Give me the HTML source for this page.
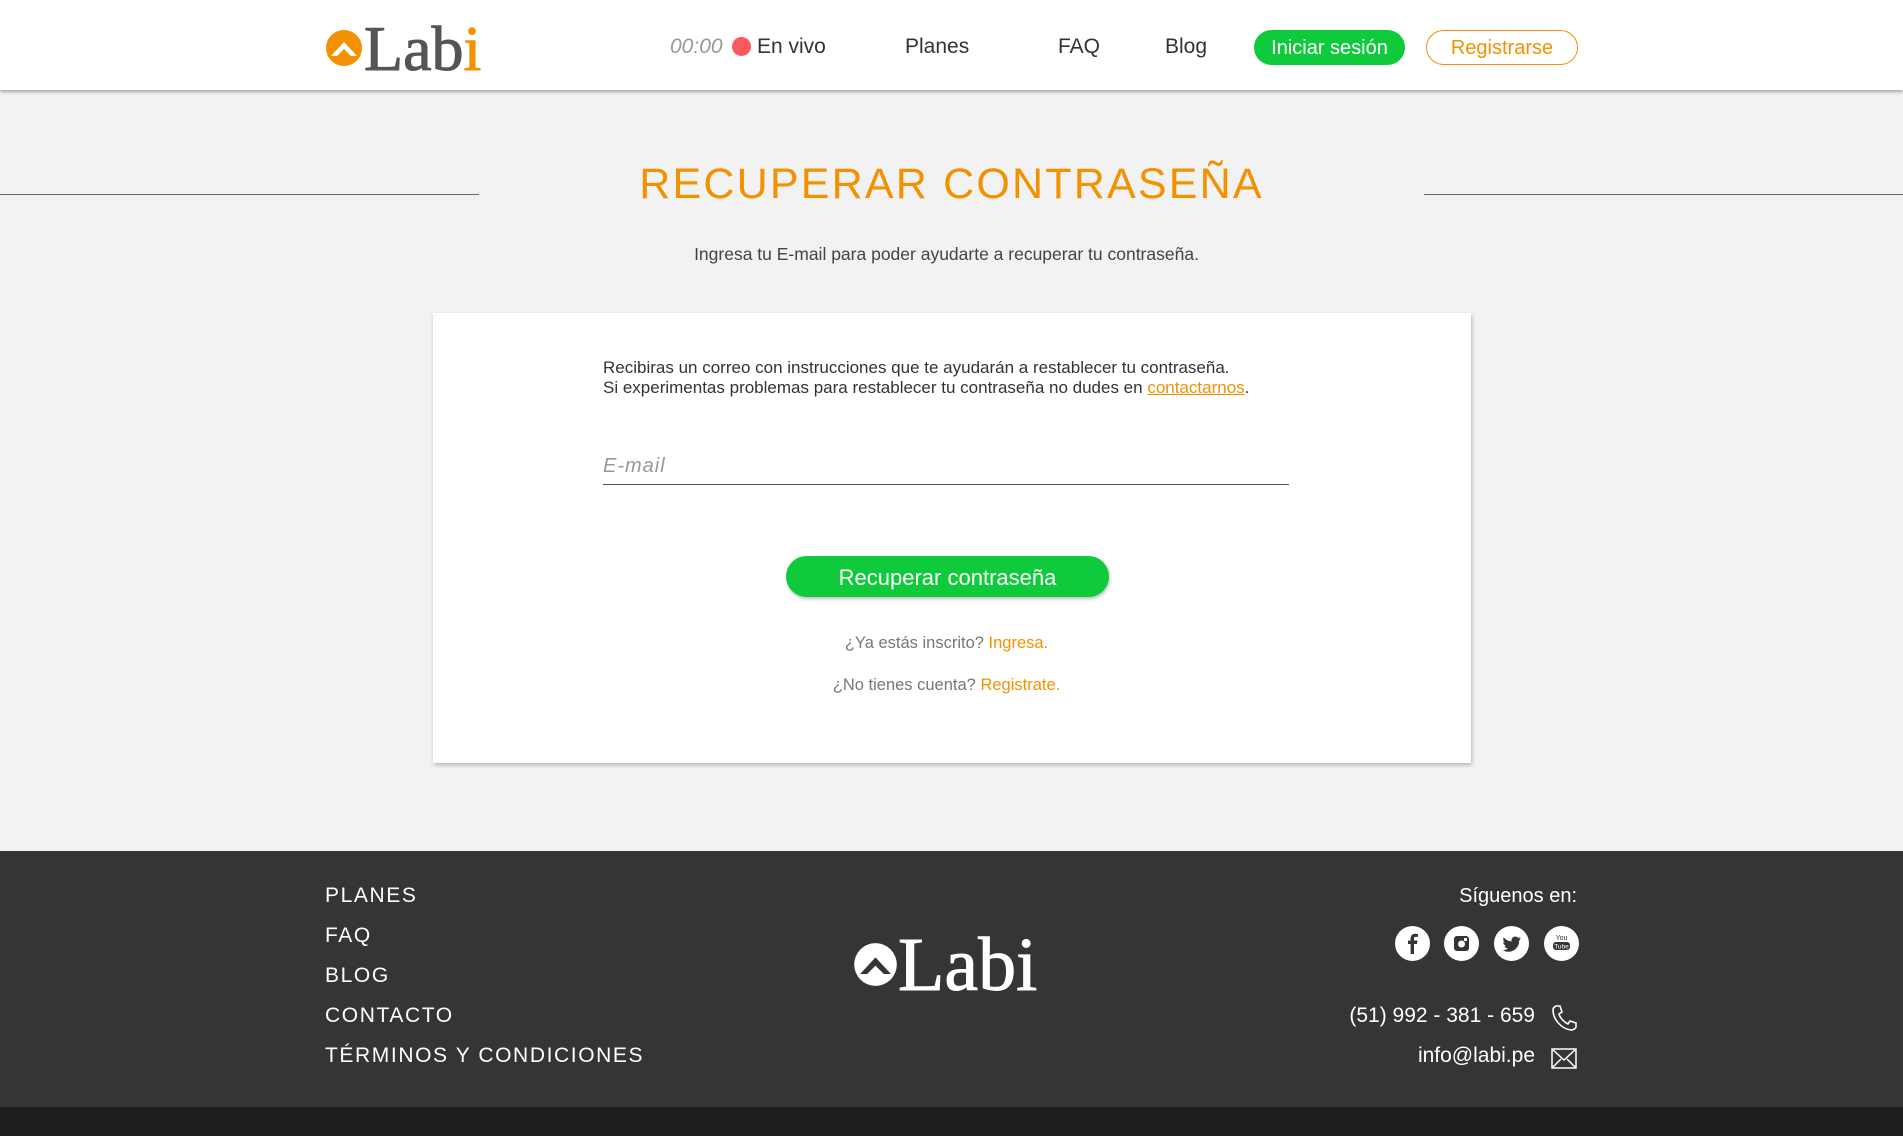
<!DOCTYPE html>
<html><head><meta charset="utf-8"><style>
*{margin:0;padding:0;box-sizing:border-box}
body{width:1903px;height:1136px;background:#f2f2f2;font-family:"Liberation Sans",sans-serif;position:relative;overflow:hidden;color:#333}
.a{position:absolute;white-space:nowrap}
header{position:absolute;left:0;top:0;width:1903px;height:90px;background:#fff;box-shadow:0 2px 3px rgba(0,0,0,.3)}
.nav{font-size:21px;color:#333}
.btn1{left:1254px;top:30px;width:151px;height:35px;border-radius:18px;background:#0fcb3c;color:#fff;font-size:20px;text-align:center;line-height:35px}
.btn2{left:1426px;top:30px;width:152px;height:35px;border-radius:18px;border:1px solid #f39200;color:#f39200;font-size:20px;text-align:center;line-height:33px;background:#fff}
.card{left:433px;top:313px;width:1038px;height:450px;background:#fff;box-shadow:1px 2px 4px rgba(0,0,0,.25)}
footer{position:absolute;left:0;top:851px;width:1903px;height:256px;background:#353535}
.fl{left:325px;color:#fff;font-size:21px;letter-spacing:1.6px}
.ic{width:35px;height:35px;border-radius:50%;background:#fff;top:926px}
</style></head><body>
<header>
<svg class="a" style="left:325px;top:29px" width="38" height="38" viewBox="0 0 38 38"><circle cx="19" cy="19" r="18" fill="#f39200"/><path d="M6 27 L19 13 L32 27 L26 27 L19 20 L12 27Z" fill="#fff"/></svg>
<div class="a" style="left:364px;top:13px;font-family:'Liberation Serif',serif;font-size:64px;color:#555;line-height:72px;-webkit-text-stroke:1px #555">Lab<span style="color:#f39200;-webkit-text-stroke:1px #f39200">i</span></div>
<div class="a nav" style="left:670px;top:35px;color:#999;font-style:italic">00:00</div>
<div class="a" style="left:732px;top:37px;width:19px;height:19px;border-radius:50%;background:#f95a5e"></div>
<div class="a nav" style="left:757px;top:35px">En vivo</div>
<div class="a nav" style="left:905px;top:35px">Planes</div>
<div class="a nav" style="left:1058px;top:35px">FAQ</div>
<div class="a nav" style="left:1165px;top:35px">Blog</div>
<div class="a btn1" style="top:30px;line-height:37px">Iniciar sesión</div>
<div class="a btn2" style="line-height:35px">Registrarse</div>
</header>
<div class="a" style="left:0;top:194px;width:479px;height:1px;background:#666"></div>
<div class="a" style="left:1424px;top:194px;width:479px;height:1px;background:#666"></div>
<div class="a" style="left:0;width:1903px;top:160px;text-align:center;font-size:43px;letter-spacing:2.2px;color:#f39200">RECUPERAR CONTRASEÑA</div>
<div class="a" style="left:0;width:1893px;top:244px;text-align:center;font-size:17.5px;color:#444">Ingresa tu E-mail para poder ayudarte a recuperar tu contraseña.</div>
<div class="a card"></div>
<div class="a" style="left:603px;top:358px;font-size:17px;line-height:20px;color:#333">Recibiras un correo con instrucciones que te ayudarán a restablecer tu contraseña.<br>Si experimentas problemas para restablecer tu contraseña no dudes en <span style="color:#f39200;text-decoration:underline">contactarnos</span>.</div>
<div class="a" style="left:603px;top:455px;font-size:20px;font-style:italic;color:#999;letter-spacing:1px">E-mail</div>
<div class="a" style="left:603px;top:484px;width:686px;height:1px;background:#555"></div>
<div class="a" style="left:786px;top:556px;width:323px;height:41px;border-radius:21px;background:#0fcb3c;color:#fff;font-size:22px;text-align:center;line-height:43px;box-shadow:1px 2px 3px rgba(0,0,0,.25)">Recuperar contraseña</div>
<div class="a" style="left:0;width:1893px;top:634px;text-align:center;font-size:16.5px;color:#777">¿Ya estás inscrito? <span style="color:#f39200">Ingresa.</span></div>
<div class="a" style="left:0;width:1893px;top:676px;text-align:center;font-size:16.5px;color:#777">¿No tienes cuenta? <span style="color:#f39200">Registrate.</span></div>
<footer></footer>
<div class="a" style="left:0;top:1107px;width:1903px;height:29px;background:#1e1e1e"></div>
<div class="a fl" style="top:884px">PLANES</div>
<div class="a fl" style="top:924px">FAQ</div>
<div class="a fl" style="top:964px">BLOG</div>
<div class="a fl" style="top:1004px">CONTACTO</div>
<div class="a fl" style="top:1044px">TÉRMINOS Y CONDICIONES</div>
<svg class="a" style="left:853px;top:942px" width="45" height="45" viewBox="0 0 38 38"><circle cx="19" cy="19" r="18" fill="#fff"/><path d="M6 27 L19 13 L32 27 L26 27 L19 20 L12 27Z" fill="#353535"/></svg>
<div class="a" style="left:898px;top:925px;font-family:'Liberation Serif',serif;font-size:76px;color:#fff;line-height:80px;-webkit-text-stroke:1px #fff">Labi</div>
<div class="a" style="right:326px;top:885px;font-size:20px;color:#fff">Síguenos en:</div>
<div class="a ic" style="left:1395px"><svg width="35" height="35" viewBox="0 0 35 35"><path d="M19 28V18h3l.5-3.5H19v-2c0-1 .4-1.6 1.7-1.6H23V8a20 20 0 0 0-2.8-.2c-2.8 0-4.6 1.7-4.6 4.8v2H13V18h2.6v10z" fill="#353535"/></svg></div>
<div class="a ic" style="left:1444px"><svg width="35" height="35" viewBox="0 0 35 35"><rect x="10" y="10" width="15" height="15" rx="3" fill="#353535"/><circle cx="17.5" cy="18" r="3.5" fill="#fff"/><rect x="20" y="12" width="3" height="3" fill="#fff"/></svg></div>
<div class="a ic" style="left:1494px"><svg width="35" height="35" viewBox="0 0 35 35"><path d="M27 12.5c-.7.3-1.4.5-2.2.6.8-.5 1.4-1.2 1.7-2.1-.7.4-1.6.7-2.4.9a3.8 3.8 0 0 0-6.5 3.5 10.8 10.8 0 0 1-7.9-4 3.8 3.8 0 0 0 1.2 5.1c-.6 0-1.2-.2-1.700-.5 0 1.900 1.300 3.400 3 3.800-.5.200-1.100.200-1.700.100.500 1.500 1.900 2.600 3.600 2.700A7.700 7.700 0 0 1 8.500 24a10.800 10.800 0 0 0 16.700-9.600c.700-.500 1.300-1.200 1.800-1.900z" fill="#353535"/></svg></div>
<div class="a ic" style="left:1544px"><svg width="35" height="35" viewBox="0 0 35 35"><text x="17.5" y="14" font-size="7" text-anchor="middle" fill="#353535" font-family="Liberation Sans">You</text><rect x="9" y="16" width="17" height="8" rx="3" fill="#353535"/><text x="17.5" y="22.5" font-size="6.5" text-anchor="middle" fill="#fff" font-family="Liberation Sans">Tube</text></svg></div>
<div class="a" style="right:368px;top:1004px;font-size:21px;color:#fff">(51) 992 - 381 - 659</div>
<svg class="a" style="left:1551px;top:1004px" width="27" height="28" viewBox="0 0 27 28"><path d="M5 2l4 0 2 6-3 2c1 4 5 8 9 10l2-3 6 2v4c-1 2-3 3-5 3C11 25 2 16 2 6c0-2 1-3 3-4z" fill="none" stroke="#fff" stroke-width="1.6"/></svg>
<div class="a" style="right:368px;top:1044px;font-size:21px;color:#fff">info@labi.pe</div>
<svg class="a" style="left:1551px;top:1048px" width="26" height="21" viewBox="0 0 26 21"><rect x="1" y="1" width="24" height="19" fill="none" stroke="#fff" stroke-width="1.5"/><path d="M1 1l12 11L25 1M1 20l9-9M25 20l-9-9" fill="none" stroke="#fff" stroke-width="1.5"/></svg>
</body></html>
